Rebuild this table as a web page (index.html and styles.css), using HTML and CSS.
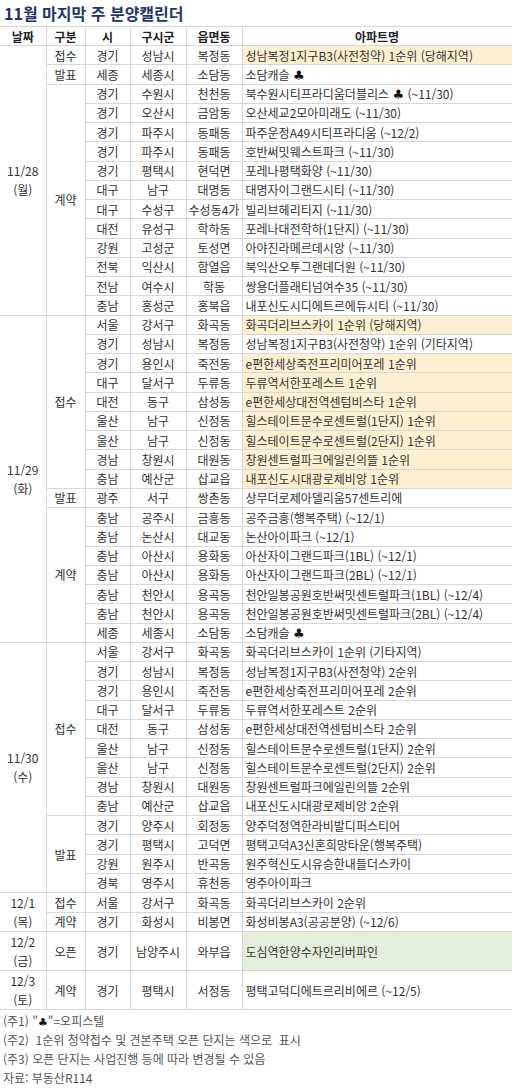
FILE: index.html
```html
<!DOCTYPE html>
<html lang="ko">
<head>
<meta charset="utf-8">
<title>11월 마지막 주 분양캘린더</title>
<link rel="stylesheet" href="styles.css">
</head>
<body>
<div class="title">11월 마지막 주 분양캘린더</div>
<table class="cal">
<colgroup>
<col class="c-date"><col class="c-type"><col class="c-si"><col class="c-gu"><col class="c-dong"><col class="c-apt">
</colgroup>
<thead>
<tr class="head"><th>날짜</th><th>구분</th><th>시</th><th>구시군</th><th>읍면동</th><th>아파트명</th></tr>
</thead>
<tbody>
<tr class="first"><td class="date" rowspan="14">11/28<br>(월)</td><td>접수</td><td>경기</td><td>성남시</td><td>복정동</td><td class="apt hl">성남복정1지구B3(사전청약) 1순위 (당해지역)</td></tr>
<tr><td>발표</td><td>세종</td><td>세종시</td><td>소담동</td><td class="apt">소담캐슬 <span class="club">♣</span></td></tr>
<tr><td rowspan="12">계약</td><td>경기</td><td>수원시</td><td>천천동</td><td class="apt">북수원시티프라디움더블리스 <span class="club">♣</span> (~11/30)</td></tr>
<tr><td>경기</td><td>오산시</td><td>금암동</td><td class="apt">오산세교2모아미래도 (~11/30)</td></tr>
<tr><td>경기</td><td>파주시</td><td>동패동</td><td class="apt">파주운정A49시티프라디움 (~12/2)</td></tr>
<tr><td>경기</td><td>파주시</td><td>동패동</td><td class="apt">호반써밋웨스트파크 (~11/30)</td></tr>
<tr><td>경기</td><td>평택시</td><td>현덕면</td><td class="apt">포레나평택화양 (~11/30)</td></tr>
<tr><td>대구</td><td>남구</td><td>대명동</td><td class="apt">대명자이그랜드시티 (~11/30)</td></tr>
<tr><td>대구</td><td>수성구</td><td>수성동4가</td><td class="apt">빌리브헤리티지 (~11/30)</td></tr>
<tr><td>대전</td><td>유성구</td><td>학하동</td><td class="apt">포레나대전학하(1단지) (~11/30)</td></tr>
<tr><td>강원</td><td>고성군</td><td>토성면</td><td class="apt">아야진라메르데시앙 (~11/30)</td></tr>
<tr><td>전북</td><td>익산시</td><td>함열읍</td><td class="apt">북익산오투그랜데더원 (~11/30)</td></tr>
<tr><td>전남</td><td>여수시</td><td>학동</td><td class="apt">쌍용더플래티넘여수35 (~11/30)</td></tr>
<tr><td>충남</td><td>홍성군</td><td>홍북읍</td><td class="apt">내포신도시디에트르에듀시티 (~11/30)</td></tr>

<tr><td class="date" rowspan="17">11/29<br>(화)</td><td rowspan="9">접수</td><td>서울</td><td>강서구</td><td>화곡동</td><td class="apt hl">화곡더리브스카이 1순위 (당해지역)</td></tr>
<tr><td>경기</td><td>성남시</td><td>복정동</td><td class="apt">성남복정1지구B3(사전청약) 1순위 (기타지역)</td></tr>
<tr><td>경기</td><td>용인시</td><td>죽전동</td><td class="apt hl">e편한세상죽전프리미어포레 1순위</td></tr>
<tr><td>대구</td><td>달서구</td><td>두류동</td><td class="apt hl">두류역서한포레스트 1순위</td></tr>
<tr><td>대전</td><td>동구</td><td>삼성동</td><td class="apt hl">e편한세상대전역센텀비스타 1순위</td></tr>
<tr><td>울산</td><td>남구</td><td>신정동</td><td class="apt hl">힐스테이트문수로센트럴(1단지) 1순위</td></tr>
<tr><td>울산</td><td>남구</td><td>신정동</td><td class="apt hl">힐스테이트문수로센트럴(2단지) 1순위</td></tr>
<tr><td>경남</td><td>창원시</td><td>대원동</td><td class="apt hl">창원센트럴파크에일린의뜰 1순위</td></tr>
<tr><td>충남</td><td>예산군</td><td>삽교읍</td><td class="apt hl">내포신도시대광로제비앙 1순위</td></tr>
<tr><td>발표</td><td>광주</td><td>서구</td><td>쌍촌동</td><td class="apt">상무더로제아델리움57센트리에</td></tr>
<tr><td rowspan="7">계약</td><td>충남</td><td>공주시</td><td>금흥동</td><td class="apt">공주금흥(행복주택) (~12/1)</td></tr>
<tr><td>충남</td><td>논산시</td><td>대교동</td><td class="apt">논산아이파크 (~12/1)</td></tr>
<tr><td>충남</td><td>아산시</td><td>용화동</td><td class="apt">아산자이그랜드파크(1BL) (~12/1)</td></tr>
<tr><td>충남</td><td>아산시</td><td>용화동</td><td class="apt">아산자이그랜드파크(2BL) (~12/1)</td></tr>
<tr><td>충남</td><td>천안시</td><td>용곡동</td><td class="apt">천안일봉공원호반써밋센트럴파크(1BL) (~12/4)</td></tr>
<tr><td>충남</td><td>천안시</td><td>용곡동</td><td class="apt">천안일봉공원호반써밋센트럴파크(2BL) (~12/4)</td></tr>
<tr><td>세종</td><td>세종시</td><td>소담동</td><td class="apt">소담캐슬 <span class="club">♣</span></td></tr>

<tr><td class="date" rowspan="13">11/30<br>(수)</td><td rowspan="9">접수</td><td>서울</td><td>강서구</td><td>화곡동</td><td class="apt">화곡더리브스카이 1순위 (기타지역)</td></tr>
<tr><td>경기</td><td>성남시</td><td>복정동</td><td class="apt">성남복정1지구B3(사전청약) 2순위</td></tr>
<tr><td>경기</td><td>용인시</td><td>죽전동</td><td class="apt">e편한세상죽전프리미어포레 2순위</td></tr>
<tr><td>대구</td><td>달서구</td><td>두류동</td><td class="apt">두류역서한포레스트 2순위</td></tr>
<tr><td>대전</td><td>동구</td><td>삼성동</td><td class="apt">e편한세상대전역센텀비스타 2순위</td></tr>
<tr><td>울산</td><td>남구</td><td>신정동</td><td class="apt">힐스테이트문수로센트럴(1단지) 2순위</td></tr>
<tr><td>울산</td><td>남구</td><td>신정동</td><td class="apt">힐스테이트문수로센트럴(2단지) 2순위</td></tr>
<tr><td>경남</td><td>창원시</td><td>대원동</td><td class="apt">창원센트럴파크에일린의뜰 2순위</td></tr>
<tr><td>충남</td><td>예산군</td><td>삽교읍</td><td class="apt">내포신도시대광로제비앙 2순위</td></tr>
<tr><td rowspan="4">발표</td><td>경기</td><td>양주시</td><td>회정동</td><td class="apt">양주덕정역한라비발디퍼스티어</td></tr>
<tr><td>경기</td><td>평택시</td><td>고덕면</td><td class="apt">평택고덕A3신혼희망타운(행복주택)</td></tr>
<tr><td>강원</td><td>원주시</td><td>반곡동</td><td class="apt">원주혁신도시유승한내들더스카이</td></tr>
<tr><td>경북</td><td>영주시</td><td>휴천동</td><td class="apt">영주아이파크</td></tr>

<tr><td class="date" rowspan="2">12/1<br>(목)</td><td>접수</td><td>서울</td><td>강서구</td><td>화곡동</td><td class="apt">화곡더리브스카이 2순위</td></tr>
<tr><td>계약</td><td>경기</td><td>화성시</td><td>비봉면</td><td class="apt">화성비봉A3(공공분양) (~12/6)</td></tr>

<tr class="tall"><td class="date">12/2<br>(금)</td><td>오픈</td><td>경기</td><td>남양주시</td><td>와부읍</td><td class="apt open">도심역한양수자인리버파인</td></tr>
<tr class="tall"><td class="date">12/3<br>(토)</td><td>계약</td><td>경기</td><td>평택시</td><td>서정동</td><td class="apt">평택고덕디에트르리비에르 (~12/5)</td></tr>
</tbody>
</table>
<div class="notes">
<p>(주1) "<span class="club">♣</span>"=오피스텔</p>
<p>(주2) &nbsp;1순위 청약접수 및 견본주택 오픈 단지는 색으로 &nbsp;표시</p>
<p>(주3) 오픈 단지는 사업진행 등에 따라 변경될 수 있음</p>
<p>자료: 부동산R114</p>
</div>
</body>
</html>
```

FILE: styles.css
```css
body {
  margin: 0;
  width: 512px;
  background: #fff;
  color: #333;
  font-family: "Noto Sans CJK KR", "Noto Sans", sans-serif;
}

.title {
  height: 26px;
  line-height: 26px;
  padding-left: 4px;
  font-size: 16px;
  font-weight: bold;
  color: #1f3768;
  overflow: hidden;
}

.cal {
  width: 512px;
  table-layout: fixed;
  border-collapse: collapse;
  font-size: 12px;
}

.c-date { width: 46px; }
.c-type { width: 39px; }
.c-si { width: 45px; }
.c-gu { width: 56px; }
.c-dong { width: 56px; }
.c-apt { width: 270px; }

.cal tr { height: 19.25px; }
.cal tr.head { height: 19px; }
.cal tr.tall { height: 38.5px; }

.cal th,
.cal td {
  border: 1px solid #d7d7d7;
  padding: 0;
  line-height: 17px;
  text-align: center;
  vertical-align: middle;
  white-space: nowrap;
  overflow: hidden;
}

.cal th {
  font-weight: bold;
  color: #222;
}

.cal th:first-child,
.cal td.date {
  border-left: none;
}

.cal td.date {
  line-height: 19px;
}

.cal td.apt {
  text-align: left;
  padding-left: 3px;
}

.cal td.hl { background: #fdf0d2; }
.cal td.open { background: #e3efdb; }

.club {
  font-family: "DejaVu Sans", sans-serif;
  color: #111;
  font-size: 13px;
  line-height: 1;
}

.notes {
  padding: 1px 0 0 3px;
  color: #555;
  font-size: 12px;
}

.notes p {
  margin: 0;
  line-height: 19px;
}

.notes .club {
  font-size: 11px;
}
```
